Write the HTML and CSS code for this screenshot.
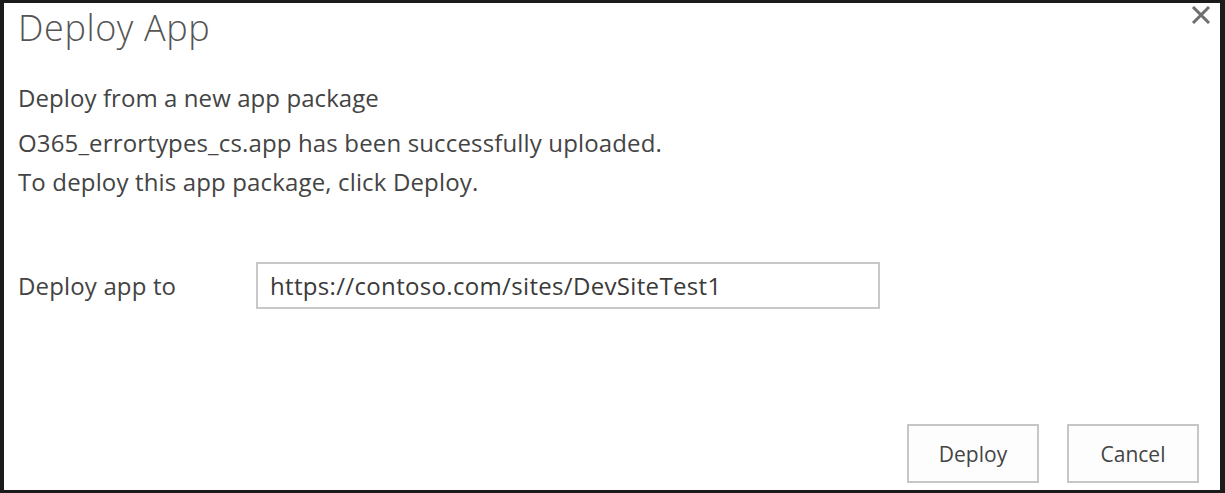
FILE: index.html
```html
<!DOCTYPE html>
<html>
<head>
<meta charset="utf-8">
<link rel="stylesheet" href="styles.css">
</head>
<body>
<div class="dialog">
  <button class="close" aria-label="Close">
    <svg width="22" height="18" viewBox="0 0 22 18"><path d="M3 1 L19 17 M19 1 L3 17" stroke="#707070" stroke-width="3" fill="none"/></svg>
  </button>
  <h1 class="title">Deploy App</h1>
  <div class="content">
    <p class="subhead">Deploy from a new app package</p>
    <p class="message">O365_errortypes_cs.app has been successfully uploaded.<br>To deploy this app package, click Deploy.</p>
    <div class="field">
      <label class="field-label">Deploy app to</label>
      <div class="field-input">https://contoso.com/sites/DevSiteTest1</div>
    </div>
  </div>
  <div class="actions">
    <button class="btn">Deploy</button>
    <button class="btn">Cancel</button>
  </div>
</div>
</body>
</html>
```
FILE: styles.css
```css
html, body {
  margin: 0;
  padding: 0;
  background: #1b1b1b;
}
.dialog {
  position: relative;
  box-sizing: border-box;
  width: 1225px;
  height: 493px;
  background: #ffffff;
  border-style: solid;
  border-color: #1b1b1b;
  border-width: 3px 5px 3px 4px;
  display: flex;
  flex-direction: column;
  font-family: "Open Sans", "Noto Sans", sans-serif;
  color: #444444;
  padding: 0 0 0 14px;
}
.close {
  position: absolute;
  top: 3px;
  right: 8px;
  border: 0;
  background: transparent;
  padding: 0;
  width: 22px;
  height: 18px;
}
.title {
  margin: 3px 0 0 0;
  font-weight: 300;
  font-size: 36px;
  line-height: 44px;
  color: #555555;
  letter-spacing: 0.6px;
}
.content {
  margin-top: 33px;
}
.subhead {
  margin: 0;
  font-size: 24px;
  line-height: 30px;
  letter-spacing: 0.08px;
}
.message {
  margin: 10px 0 0 0;
  font-size: 24px;
  line-height: 39px;
  letter-spacing: 0.15px;
}
.field {
  display: flex;
  align-items: center;
  margin-top: 61px;
}
.field-label {
  width: 238px;
  font-size: 24px;
  letter-spacing: 0.15px;
}
.field-input {
  box-sizing: border-box;
  width: 624px;
  height: 47px;
  border: 2px solid #c8c8c8;
  padding: 0 12px;
  font-size: 24px;
  line-height: 43px;
  color: #3a3a3a;
  letter-spacing: 0.33px;
}
.actions {
  margin-top: auto;
  display: flex;
  justify-content: flex-end;
  gap: 28px;
  padding: 0 21px 7px 0;
}
.btn {
  box-sizing: border-box;
  width: 132px;
  height: 59px;
  border: 2px solid #c6c6c6;
  background: #fdfdfd;
  font-family: "Open Sans", "Noto Sans", sans-serif;
  font-size: 21px;
  color: #444444;
  padding: 0;
}
```
